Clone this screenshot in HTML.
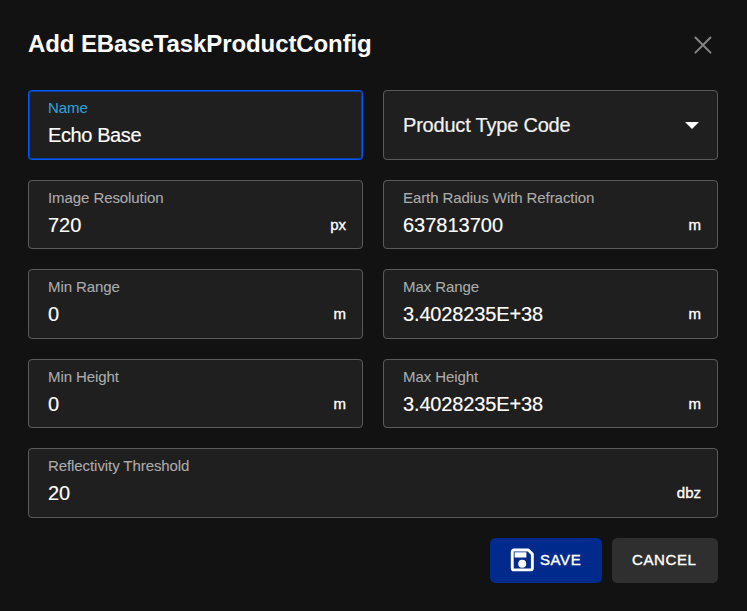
<!DOCTYPE html>
<html>
<head>
<meta charset="utf-8">
<style>
html,body{margin:0;padding:0;}
body{width:747px;height:611px;background:#121212;position:relative;overflow:hidden;font-family:"Liberation Sans",sans-serif;color:#fff;}
.title{position:absolute;left:28px;top:29px;font-size:24px;font-weight:700;line-height:30px;letter-spacing:-0.1px;white-space:nowrap;color:#fff;}
.close{position:absolute;left:686px;top:28px;width:34px;height:34px;}
.f{position:absolute;background:#1f1f1f;border-radius:4px;}
.b{position:absolute;left:0;top:0;right:0;bottom:0;border:1px solid #5a5a5a;border-radius:4px;}
.focus .b{border-color:#0059ff;box-shadow:inset 0 0 0 1px rgba(0,89,255,0.55);border-radius:3.5px;}
.l{position:absolute;left:20px;top:8px;font-size:15px;line-height:20px;letter-spacing:-0.08px;color:#acacac;-webkit-text-stroke:0.1px #acacac;white-space:nowrap;}
.v{position:absolute;left:20px;top:32px;font-size:20px;line-height:26px;color:#fff;-webkit-text-stroke:0.15px #fff;white-space:nowrap;}
.focus .l{color:#2f9fd6;-webkit-text-stroke:0.1px #2f9fd6;}
.u{position:absolute;right:17px;top:35px;font-size:15px;line-height:20px;font-weight:400;-webkit-text-stroke:0.35px #fff;color:#fff;white-space:nowrap;}
.sel{position:absolute;left:20px;top:22px;font-size:20px;line-height:26px;letter-spacing:-0.2px;color:#f2f2f2;-webkit-text-stroke:0.2px #f2f2f2;white-space:nowrap;}
.arrow{position:absolute;left:302px;top:32px;width:0;height:0;border-left:7px solid transparent;border-right:7px solid transparent;border-top:7px solid #fff;}
.btn{position:absolute;top:538px;height:45px;border-radius:5.5px;}
.save{left:490px;width:112px;background:#002a8b;}
.cancel{left:612px;width:106px;background:#2f2f2f;}
.bt{position:absolute;top:12px;font-size:15px;line-height:20px;font-weight:400;-webkit-text-stroke:0.4px #fff;letter-spacing:0.6px;color:#fff;white-space:nowrap;}
</style>
</head>
<body>
<div class="title">Add EBaseTaskProductConfig</div>
<svg class="close" viewBox="0 0 34 34"><path d="M9.4 9.5L24.5 24.6M24.5 9.5L9.4 24.6" stroke="#858585" stroke-width="2" stroke-linecap="round"/></svg>

<div class="f focus" style="left:28px;top:90px;width:335px;height:70px;"><div class="b"></div>
  <div class="l">Name</div>
  <div class="v" style="letter-spacing:-0.4px">Echo Base</div>
</div>
<div class="f" style="left:383px;top:90px;width:335px;height:70px;"><div class="b"></div>
  <div class="sel">Product Type Code</div>
  <div class="arrow"></div>
</div>

<div class="f" style="left:28px;top:180px;width:335px;height:69px;"><div class="b"></div>
  <div class="l">Image Resolution</div>
  <div class="v">720</div>
  <div class="u">px</div>
</div>
<div class="f" style="left:383px;top:180px;width:335px;height:69px;"><div class="b"></div>
  <div class="l">Earth Radius With Refraction</div>
  <div class="v">637813700</div>
  <div class="u">m</div>
</div>

<div class="f" style="left:28px;top:269px;width:335px;height:70px;"><div class="b"></div>
  <div class="l">Min Range</div>
  <div class="v">0</div>
  <div class="u">m</div>
</div>
<div class="f" style="left:383px;top:269px;width:335px;height:70px;"><div class="b"></div>
  <div class="l">Max Range</div>
  <div class="v" style="letter-spacing:-0.15px">3.4028235E+38</div>
  <div class="u">m</div>
</div>

<div class="f" style="left:28px;top:359px;width:335px;height:69px;"><div class="b"></div>
  <div class="l">Min Height</div>
  <div class="v">0</div>
  <div class="u">m</div>
</div>
<div class="f" style="left:383px;top:359px;width:335px;height:69px;"><div class="b"></div>
  <div class="l">Max Height</div>
  <div class="v" style="letter-spacing:-0.15px">3.4028235E+38</div>
  <div class="u">m</div>
</div>

<div class="f" style="left:28px;top:448px;width:690px;height:70px;"><div class="b"></div>
  <div class="l">Reflectivity Threshold</div>
  <div class="v">20</div>
  <div class="u">dbz</div>
</div>

<div class="btn save">
  <div class="bt" style="left:50px">SAVE</div>
</div>
<svg style="position:absolute;left:506px;top:544px;width:32px;height:32px" viewBox="0 0 32 32">
  <path d="M7.9 6.05H22.3L26.35 10.1V24.2A1.65 1.65 0 0 1 24.7 25.85H7.9A1.65 1.65 0 0 1 6.25 24.2V7.7A1.65 1.65 0 0 1 7.9 6.05Z" fill="none" stroke="#fff" stroke-width="2.9" stroke-linejoin="round"/>
  <rect x="8.6" y="8.3" width="11.8" height="5.2" fill="#fff"/>
  <circle cx="16.2" cy="19.8" r="4" fill="#fff"/>
</svg>
<div class="btn cancel">
  <div class="bt" style="left:20px">CANCEL</div>
</div>
</body>
</html>
